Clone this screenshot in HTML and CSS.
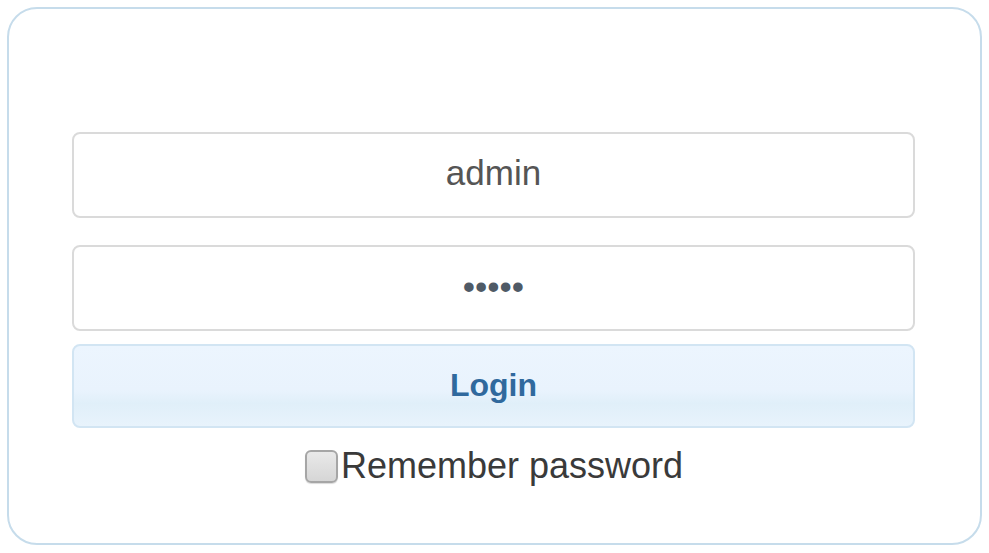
FILE: index.html
```html
<!DOCTYPE html>
<html lang="en">
<head>
<meta charset="utf-8">
<title>Login</title>
<link rel="stylesheet" href="styles.css">
</head>
<body>
<div class="card">
  <form class="login-form">
    <input class="field" type="text" value="admin">
    <input class="field field-pass" type="password" value="admin">
    <button class="login-btn" type="button">Login</button>
    <label class="remember">
      <input class="check" type="checkbox">
      <span>Remember password</span>
    </label>
  </form>
</div>
</body>
</html>
```

FILE: styles.css
```css
html, body {
  margin: 0;
  padding: 0;
  background: #ffffff;
}

body {
  padding: 7px;
  font-family: "Liberation Sans", Arial, sans-serif;
}

.card {
  box-sizing: border-box;
  width: 975px;
  height: 538px;
  border: 2px solid #c6dceb;
  border-radius: 30px;
  background: #ffffff;
  padding: 123px 65px 0 63px;
}

.login-form {
  display: flex;
  flex-direction: column;
  align-items: stretch;
}

.field {
  box-sizing: border-box;
  height: 86px;
  width: 100%;
  margin: 0;
  border: 2px solid #dadada;
  border-radius: 8px;
  background: #ffffff;
  font-family: "Liberation Sans", Arial, sans-serif;
  font-size: 35px;
  color: #555555;
  text-align: center;
  outline: none;
  padding: 0 10px 4px;
}

.field-pass {
  margin-top: 27px;
  font-size: 35px;
  color: #4f5a66;
  padding-bottom: 2px;
}

.login-btn {
  box-sizing: border-box;
  height: 84px;
  width: 100%;
  margin: 13px 0 0;
  border: 2px solid #d2e5f3;
  border-radius: 8px;
  background: linear-gradient(#ecf5fe 0%, #e9f3fd 55%, #e0eff9 72%, #e8f3fc 100%);
  font-family: "Liberation Sans", Arial, sans-serif;
  font-weight: bold;
  font-size: 32px;
  color: #30699d;
  padding: 0 0 2px;
  cursor: pointer;
}

.remember {
  align-self: center;
  display: flex;
  align-items: center;
  margin-top: 18px;
  margin-left: 1px;
  font-size: 36px;
  line-height: 40px;
  color: #3a3a3a;
}

.check {
  appearance: none;
  -webkit-appearance: none;
  box-sizing: border-box;
  width: 33px;
  height: 33px;
  margin: 0 3px 0 0;
  border: 2px solid #a6a6a6;
  border-radius: 6px;
  background: linear-gradient(#e9e9e9, #d6d6d6);
  box-shadow: 0 1px 1px rgba(0, 0, 0, 0.15);
}
```
